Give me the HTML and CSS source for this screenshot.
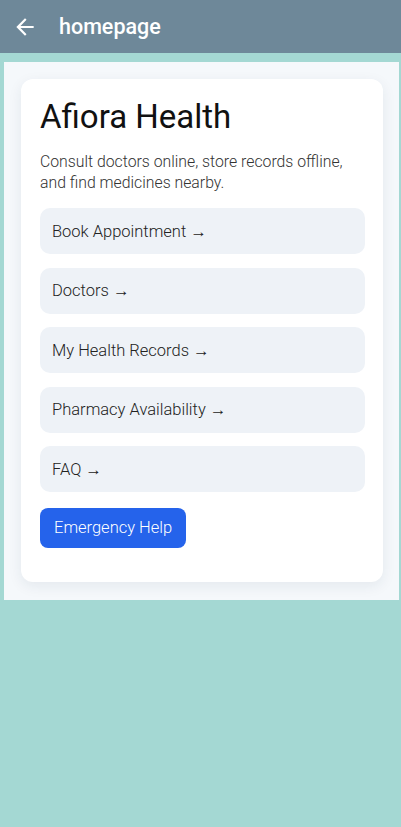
FILE: index.html
```html
<!DOCTYPE html>
<html>
<head>
<meta charset="utf-8">
<link rel="stylesheet" href="styles.css">
</head>
<body>
<header class="appbar">
  <svg class="back" width="26" height="26" viewBox="0 0 24 24"><path d="M20 11H7.83l5.59-5.59L12 4l-8 8 8 8 1.41-1.41L7.83 13H20v-2z" fill="#fff"/></svg>
  <span class="appbar-title">homepage</span>
</header>
<main class="page">
  <section class="card">
    <h1 class="title">Afiora Health</h1>
    <p class="subtitle">Consult doctors online, store records offline, and find medicines nearby.</p>
    <nav class="menu">
      <a class="menu-item">Book Appointment →</a>
      <a class="menu-item">Doctors →</a>
      <a class="menu-item">My Health Records →</a>
      <a class="menu-item">Pharmacy Availability →</a>
      <a class="menu-item">FAQ →</a>
    </nav>
    <button class="emergency">Emergency Help</button>
  </section>
</main>
</body>
</html>
```
FILE: styles.css
```css
html, body {
  margin: 0;
  padding: 0;
}
body {
  background: #a4d8d3;
  height: 827px;
  font-family: Roboto, "Noto Sans", sans-serif;
}
.appbar {
  height: 53px;
  background: #6e8899;
  display: flex;
  align-items: center;
  padding-left: 12px;
  box-sizing: border-box;
}
.back {
  margin-right: 21px;
}
.appbar-title {
  font-family: Roboto, sans-serif;
  font-weight: 500;
  font-size: 21.5px;
  color: #fff;
}
.page {
  margin: 9px 2px 0 4px;
  background: #f5f8fb;
  padding: 17px 16px 18px 17px;
}
.card {
  background: #fff;
  border-radius: 12px;
  box-shadow: 0 4px 14px rgba(30, 50, 80, 0.08);
  padding: 19px 18px 34px 19px;
}
.title {
  margin: 0;
  font-size: 33px;
  font-weight: 400;
  line-height: 38px;
  color: #111;
}
.subtitle {
  margin: 15px 0 15px;
  font-size: 15.8px;
  line-height: 21px;
  color: #333;
  font-weight: 300;
}
.menu {
  display: flex;
  flex-direction: column;
  gap: 13.5px;
}
.menu-item {
  display: flex;
  align-items: center;
  height: 46px;
  background: #eef2f7;
  border-radius: 10px;
  padding-left: 12px;
  font-size: 16.5px;
  color: #222;
  font-weight: 300;
}
.emergency {
  margin-top: 15.5px;
  height: 40px;
  padding: 0 14px;
  background: #2563eb;
  color: #fff;
  border: 0;
  border-radius: 8px;
  font-family: Roboto, sans-serif;
  font-size: 16.5px;
  font-weight: 300;
}
```
